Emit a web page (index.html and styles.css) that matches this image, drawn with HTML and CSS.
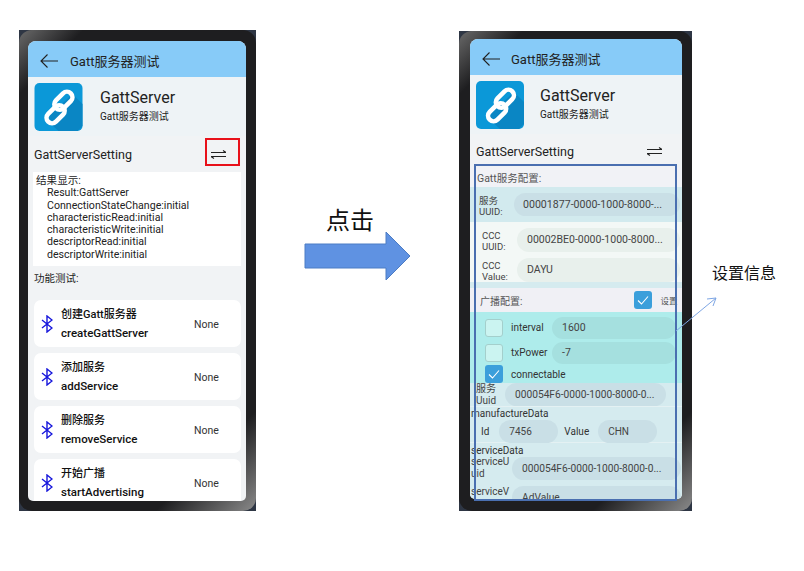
FILE: index.html
```html
<!DOCTYPE html>
<html lang="en">
<head>
    <meta charset="UTF-8">
    <title>GattServer</title>
    <link rel="stylesheet" href="styles.css">
</head>
<body>

<svg width="0" height="0" class="defs">
    <symbol id="logo" viewBox="0 0 48 48">
        <rect width="48" height="48" rx="5" fill="#0b98d8"/>
        <polygon points="38,11 48,21 48,43 43,48 24,48 11,36" fill="#0a86c4"/>
        <g fill="none" stroke="#fff" stroke-width="4.600" transform="translate(25 24.500) rotate(-45)">
            <rect x="-18" y="-3.500" width="21" height="11" rx="5.500"/>
            <rect x="-3" y="-7.500" width="21" height="11" rx="5.500"/>
        </g>
    </symbol>
    <symbol id="bt" viewBox="0 0 12 18">
        <path d="M1 5l10 8-5 4V1l5 4-10 8" fill="none" stroke="#1616dc" stroke-width="1.4"/>
    </symbol>
    <symbol id="swap" viewBox="0 0 15 9">
        <path d="M0 2.500h15l-3-2M15 6.500H0l3 2" fill="none" stroke="#222" stroke-width="1.100"/>
    </symbol>
    <symbol id="back" viewBox="0 0 18 14">
        <path d="M18 7H1M7.500 .5L1 7l6.500 6.500" fill="none" stroke="#222" stroke-width="1.100"/>
    </symbol>
</svg>

<!-- left phone -->
<div class="phone phone-left">
    <div class="screen">
        <div class="titlebar">
            <svg class="back"><use href="#back"/></svg>
            <span>Gatt服务器测试</span>
        </div>
        <div class="appinfo">
            <svg class="logo"><use href="#logo"/></svg>
            <div class="appname">
                <div class="name">GattServer</div>
                <div class="sub">Gatt服务器测试</div>
            </div>
        </div>
        <div class="setting-row">
            <span>GattServerSetting</span>
            <svg class="swap"><use href="#swap"/></svg>
        </div>
        <div class="results">
            <div>结果显示:</div>
            <div class="result-line">Result:GattServer</div>
            <div class="result-line">ConnectionStateChange:initial</div>
            <div class="result-line">characteristicRead:initial</div>
            <div class="result-line">characteristicWrite:initial</div>
            <div class="result-line">descriptorRead:initial</div>
            <div class="result-line">descriptorWrite:initial</div>
        </div>
        <div class="section-title">功能测试:</div>
        <div class="card">
            <svg class="bt"><use href="#bt"/></svg>
            <div class="card-text"><div>创建Gatt服务器</div><div class="api">createGattServer</div></div>
            <span class="state">None</span>
        </div>
        <div class="card">
            <svg class="bt"><use href="#bt"/></svg>
            <div class="card-text"><div>添加服务</div><div class="api">addService</div></div>
            <span class="state">None</span>
        </div>
        <div class="card">
            <svg class="bt"><use href="#bt"/></svg>
            <div class="card-text"><div>删除服务</div><div class="api">removeService</div></div>
            <span class="state">None</span>
        </div>
        <div class="card">
            <svg class="bt"><use href="#bt"/></svg>
            <div class="card-text"><div>开始广播</div><div class="api">startAdvertising</div></div>
            <span class="state">None</span>
        </div>
    </div>
</div>
<div class="red-mark"></div>

<!-- arrow between phones -->
<div class="click-label">点击</div>
<svg class="big-arrow" width="108" height="50" viewBox="0 0 108 50">
    <polygon points="1,13 82,13 82,1 106,25 82,49 82,37 1,37" fill="#5f92e2" stroke="#4c7cc4"/>
</svg>

<!-- right phone -->
<div class="phone phone-right">
    <div class="screen">
        <div class="titlebar">
            <svg class="back"><use href="#back"/></svg>
            <span>Gatt服务器测试</span>
        </div>
        <div class="appinfo">
            <svg class="logo"><use href="#logo"/></svg>
            <div class="appname">
                <div class="name">GattServer</div>
                <div class="sub">Gatt服务器测试</div>
            </div>
        </div>
        <div class="setting-row">
            <span>GattServerSetting</span>
            <svg class="swap"><use href="#swap"/></svg>
        </div>

        <div class="band band-head">Gatt服务配置:</div>
        <div class="band band-uuid">
            <div class="lbl">服务<br>UUID:</div>
            <div class="field">00001877-0000-1000-8000-...</div>
        </div>
        <div class="band band-ccc">
            <div class="ccc-row">
                <div class="lbl">CCC<br>UUID:</div>
                <div class="field">00002BE0-0000-1000-8000...</div>
            </div>
            <div class="ccc-row">
                <div class="lbl">CCC<br>Value:</div>
                <div class="field">DAYU</div>
            </div>
        </div>
        <div class="band band-peek"></div>
        <div class="band band-adv">
            <span>广播配置:</span>
            <span class="check on adv-check"><svg viewBox="0 0 18 18"><path d="M4 9.500l3.500 3.500L14 5.500"/></svg></span>
            <span class="adv-set">设置</span>
        </div>
        <div class="band band-cyan">
            <div class="adv-row">
                <span class="check"></span>
                <span class="adv-lbl">interval</span>
                <div class="field">1600</div>
            </div>
            <div class="adv-row">
                <span class="check"></span>
                <span class="adv-lbl">txPower</span>
                <div class="field">-7</div>
            </div>
            <div class="adv-row conn">
                <span class="check on"><svg viewBox="0 0 18 18"><path d="M4 9.500l3.500 3.500L14 5.500"/></svg></span>
                <span class="adv-lbl">connectable</span>
            </div>
        </div>
        <div class="band band-low">
            <div class="low-row uuid-row">
                <div class="lbl-dark">服务<br>Uuid</div>
                <div class="field">000054F6-0000-1000-8000-0...</div>
            </div>
            <div class="low-block manu">
                <div class="low-title">manufactureData</div>
                <div class="manu-row">
                    <span>Id</span><div class="field">7456</div>
                    <span>Value</span><div class="field">CHN</div>
                </div>
            </div>
            <div class="low-block service">
                <div class="low-title">serviceData</div>
                <div class="low-row service-row">
                    <div class="lbl-dark">serviceU<br>uid</div>
                    <div class="field">000054F6-0000-1000-8000-0...</div>
                </div>
                <div class="low-row service-row value-row">
                    <div class="lbl-dark">serviceV</div>
                    <div class="field">AdValue</div>
                </div>
            </div>
        </div>
    </div>
</div>
<div class="blue-mark"></div>

<svg class="thin-arrow" width="46" height="40" viewBox="0 0 46 40">
    <path d="M1 38L41 5M32 6l9-1-3 8" fill="none" stroke="#7ea6e4"/>
</svg>
<div class="info-label">设置信息</div>

</body>
</html>
```

FILE: styles.css
```css
body {
    margin: 0;
    width: 804px;
    height: 571px;
    position: relative;
    overflow: hidden;
    background: #fff;
    font-family: "Roboto", "Noto Sans CJK SC", sans-serif;
    color: #222;
}
.defs {
    position: absolute;
}

/* phones sit on a free canvas */
.phone {
    position: absolute;
    box-sizing: border-box;
    border-radius: 13px;
    background: linear-gradient(135deg, #6a6a6a 0, #1e1e20 9%, #1e1e20 86%, #8a8a8a 100%);
}
.phone::before {
    content: "";
    position: absolute;
    inset: 0;
    z-index: -1;
    background: #2e3644;
}
.phone-left {
    left: 19px;
    top: 30px;
    width: 237px;
    height: 481px;
    padding: 11px 10px 10px 9px;
}
.phone-right {
    left: 459px;
    top: 31px;
    width: 233px;
    height: 480px;
    padding: 8px 10px 12px 11px;
}
.screen {
    height: 100%;
    overflow: hidden;
    border-radius: 8px 8px 5px 5px;
    background: #f1f3f5;
}

.titlebar {
    height: 36px;
    box-sizing: border-box;
    display: flex;
    align-items: center;
    padding: 3px 0 0 12px;
    background: #87cbf8;
    font-size: 13px;
}
.back {
    width: 18px;
    height: 14px;
    margin-right: 12px;
}
.phone-right .back {
    margin-right: 11px;
}
.appinfo {
    height: 59px;
    display: flex;
    align-items: center;
    padding-left: 6px;
    background: #eef3f6;
}
.logo {
    width: 49px;
    height: 48px;
    margin-right: 17px;
}
.phone-right .logo {
    width: 48px;
    margin-right: 16px;
}
.name {
    font-size: 16px;
    line-height: 20px;
}
.sub {
    font-size: 10px;
    line-height: 16px;
    margin-top: 1px;
}
.setting-row {
    height: 34px;
    display: flex;
    align-items: center;
    justify-content: space-between;
    padding: 2px 20px 0 6px;
    box-sizing: border-box;
    font-size: 12.500px;
}
.swap {
    width: 15px;
    height: 9px;
}

/* left phone */
.results {
    margin: 2px 5px 0;
    height: 94px;
    padding: 3px;
    box-sizing: border-box;
    background: #fff;
    font-size: 10.600px;
    line-height: 12.300px;
}
.result-line {
    padding-left: 11px;
}
.section-title {
    font-size: 10.500px;
    line-height: 14px;
    padding: 6px 6px 14px;
}
.card {
    margin: 0 5px 6px 6px;
    height: 47px;
    padding-left: 7px;
    display: flex;
    align-items: center;
    background: #fff;
    border-radius: 7px;
}
.bt {
    width: 12px;
    height: 18px;
    margin-right: 8px;
}
.card-text {
    width: 133px;
    padding-top: 1px;
    font-size: 11px;
    font-weight: 500;
    line-height: 18px;
    color: #111;
}
.api {
    font-size: 11.500px;
}
.state {
    padding-top: 1px;
    font-size: 10.500px;
    color: #333;
}

/* right phone */
.phone-right .setting-row {
    height: 33px;
}
.band {
    box-sizing: border-box;
}
.band-head {
    height: 20px;
    padding: 6px 0 0 7px;
    font-size: 10.500px;
    line-height: 12px;
    color: #555;
    background: #f1f2f6;
}
.lbl, .lbl-dark {
    font-size: 9.500px;
    line-height: 11px;
    color: #444;
}
.lbl {
    padding-top: 2px;
}
.field {
    flex: 1;
    height: 23px;
    line-height: 23px;
    padding-left: 10px;
    border-radius: 12px;
    background: #c9dfe6;
    font-size: 10px;
    color: #444;
    white-space: nowrap;
    overflow: hidden;
}
.band-uuid {
    height: 35px;
    display: flex;
    align-items: center;
    padding: 0 2px 0 9px;
    background: #d2eaee;
}
.band-uuid .lbl {
    width: 35px;
}
.band-uuid .field {
    padding-left: 9px;
    font-size: 10.600px;
}
.band-ccc {
    height: 60px;
    padding-top: 6px;
    background: #f3f8f6;
}
.ccc-row {
    height: 30px;
    display: flex;
    align-items: flex-start;
    padding: 0 2px 0 12px;
}
.ccc-row .lbl {
    width: 35px;
}
.ccc-row .field {
    height: 24px;
    line-height: 24px;
    background: #e8f0ec;
    font-size: 10.500px;
}
.band-peek {
    height: 6px;
    background: #d5ebef;
}
.band-adv {
    height: 24px;
    display: flex;
    align-items: center;
    padding-left: 10px;
    background: #f0f0f5;
    font-size: 10px;
    color: #555;
    white-space: nowrap;
}
.check {
    flex: none;
    box-sizing: border-box;
    display: block;
    width: 18px;
    height: 18px;
    border: 1px solid #a4cfcc;
    border-radius: 3px;
    background: #cbf4f1;
}
.check.on {
    border: 0;
    background: #3b9fdb;
}
.check svg {
    display: block;
}
.check path {
    fill: none;
    stroke: #fff;
    stroke-width: 1.100;
}
.adv-check {
    margin-left: 112px;
}
.adv-set {
    margin-left: 8px;
    font-size: 8.500px;
}
.band-cyan {
    height: 71px;
    padding: 3px 6px 0 15px;
    background: #aeeceb;
}
.adv-row {
    height: 25px;
    display: flex;
    align-items: center;
    font-size: 10px;
}
.adv-row.conn {
    height: 18px;
}
.adv-lbl {
    width: 41px;
    margin-left: 8px;
    color: #333;
}
.band-cyan .field {
    height: 22px;
    line-height: 22px;
    background: #a5e0df;
    font-size: 10.500px;
}
.band-low {
    height: 120px;
    background: #d5ebef;
    color: #333;
}
.lbl-dark {
    font-size: 10px;
    line-height: 12px;
    white-space: nowrap;
}
.low-row {
    display: flex;
    align-items: center;
}
.uuid-row {
    height: 24px;
    padding: 0 16px 0 6px;
    border-bottom: 1px solid #e4f1f3;
    box-sizing: border-box;
}
.uuid-row .lbl-dark {
    width: 29px;
    padding-top: 1px;
}
.uuid-row .field, .service-row .field {
    font-size: 10.200px;
}
.low-title {
    font-size: 10px;
    line-height: 12px;
    padding-left: 1px;
}
.manu {
    height: 36px;
    padding-top: 1px;
    box-sizing: border-box;
    border-bottom: 1px solid #e4f1f3;
}
.manu-row {
    display: flex;
    align-items: center;
    padding-left: 11px;
    font-size: 10px;
}
.manu-row .field {
    flex: none;
    box-sizing: border-box;
    width: 59px;
    margin: 0 6px 0 10px;
}
.manu-row .field + span + .field {
    margin-left: 9px;
}
.service {
    padding-top: 2px;
}
.service .low-title {
    margin-bottom: -1px;
}
.service-row {
    height: 24px;
    padding: 0 1px;
}
.service-row .lbl-dark {
    width: 41px;
}
.value-row {
    margin-top: 6px;
    align-items: flex-start;
}

/* marks and labels over the picture */
.red-mark {
    position: absolute;
    left: 205px;
    top: 138px;
    width: 31px;
    height: 24px;
    border: 2px solid #e8101a;
}
.blue-mark {
    position: absolute;
    left: 474px;
    top: 164px;
    width: 199px;
    height: 333px;
    border: 2px solid #4a6fb0;
}
.click-label {
    position: absolute;
    left: 326px;
    top: 203px;
    font-size: 24px;
    line-height: 32px;
    font-family: "Noto Sans CJK SC", sans-serif;
    color: #111;
}
.big-arrow {
    position: absolute;
    left: 304px;
    top: 231px;
}
.thin-arrow {
    position: absolute;
    left: 675px;
    top: 293px;
}
.info-label {
    position: absolute;
    left: 712px;
    top: 261px;
    font-size: 16px;
    line-height: 22px;
    font-family: "Noto Sans CJK SC", sans-serif;
    color: #111;
}
```
